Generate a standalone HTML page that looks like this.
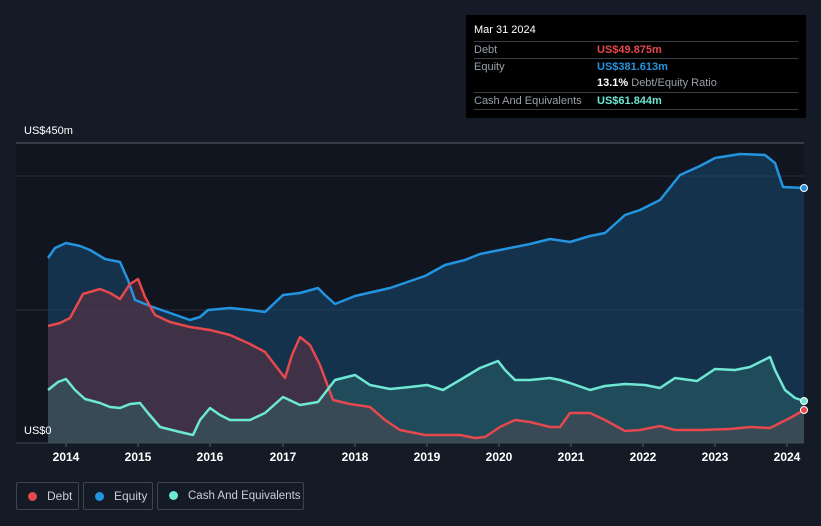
<!DOCTYPE html>
<html><head><meta charset="utf-8"><style>
html,body{margin:0;width:821px;height:526px;overflow:hidden}
body{background:#151b26;font-family:"Liberation Sans",sans-serif;position:relative}
.tt{position:absolute;left:466px;top:15px;width:340px;height:103px;background:#000;color:#fff;font-size:11px}
.row{position:absolute;left:8px;width:324px;border-top:1px solid #3a3f46;height:17px;line-height:17px}
.lab{color:#9aa0a6;position:absolute;left:0}
.val{position:absolute;left:123px;font-weight:bold;white-space:nowrap}
.leg{position:absolute;top:482px;height:28px;border:1px solid #3e4450;border-radius:2px;color:#c9ced6;font-size:12px;line-height:26px;box-sizing:border-box;white-space:nowrap;overflow:hidden}
.dot{display:inline-block;width:9px;height:9px;border-radius:50%;margin:0 10px 0 11px;vertical-align:-1px}
.yr{position:absolute;top:450px;color:#fff;font-size:12px;font-weight:bold;transform:translateX(-50%)}
</style></head><body>
<svg width="821" height="526" style="position:absolute;left:0;top:0">
<rect x="16" y="143" width="788" height="300" fill="#10151f"/>
<line x1="16" y1="143" x2="804" y2="143" stroke="#5a606a"/>
<line x1="16" y1="176" x2="804" y2="176" stroke="#2a303a"/>
<line x1="16" y1="310" x2="804" y2="310" stroke="#2a303a"/>
<line x1="16" y1="443" x2="804" y2="443" stroke="#444a54"/>
<polygon fill="#1a4a73" fill-opacity="0.55" points="48,443 48,258 55,248 66,243 80,246 90,250 105,259 120,262 128,280 135,300 150,306 170,313 190,320 200,317 208,310 230,308 250,310 265,312 283,295 300,293 318,288 325,295 335,304 355,296 390,288 425,276 445,265 465,260 480,254 500,250 530,244 550,239 570,242 590,236 605,233 625,215 640,210 660,200 680,175 700,166 715,158 740,154 765,155 775,163 783,187 804,188 804,443"/>
<polygon fill="#6a3040" fill-opacity="0.5" points="48,443 48,326 60,323 70,318 83,294 100,289 110,293 120,299 130,284 138,279 145,297 155,315 170,322 190,327 210,330 230,335 250,344 265,352 275,365 285,378 292,355 300,337 310,345 320,365 333,400 350,404 370,407 385,420 400,430 425,435 460,435 475,438 485,437 500,427 515,420 530,422 550,427 560,427 570,413 590,413 605,420 625,431 640,430 660,426 675,430 700,430 730,429 750,427 770,428 790,418 804,410 804,443"/>
<polygon fill="#2f6a6a" fill-opacity="0.45" points="48,443 48,390 58,382 66,379 75,390 85,399 100,403 110,407 120,408 130,404 140,403 148,413 160,427 180,432 193,435 200,420 210,408 220,415 230,420 250,420 265,413 283,397 300,405 318,402 335,380 355,375 370,385 390,389 410,387 427,385 443,390 460,380 480,368 498,361 505,370 515,380 530,380 550,378 560,380 570,383 590,390 605,386 625,384 645,385 660,388 675,378 697,381 715,369 735,370 750,367 760,362 770,357 775,370 785,390 795,398 804,401 804,443"/>
<g fill="none" stroke-width="2.5" stroke-linejoin="round">
<polyline stroke="#2394df" points="48,258 55,248 66,243 80,246 90,250 105,259 120,262 128,280 135,300 150,306 170,313 190,320 200,317 208,310 230,308 250,310 265,312 283,295 300,293 318,288 325,295 335,304 355,296 390,288 425,276 445,265 465,260 480,254 500,250 530,244 550,239 570,242 590,236 605,233 625,215 640,210 660,200 680,175 700,166 715,158 740,154 765,155 775,163 783,187 804,188"/>
<polyline stroke="#e5484d" points="48,326 60,323 70,318 83,294 100,289 110,293 120,299 130,284 138,279 145,297 155,315 170,322 190,327 210,330 230,335 250,344 265,352 275,365 285,378 292,355 300,337 310,345 320,365 333,400 350,404 370,407 385,420 400,430 425,435 460,435 475,438 485,437 500,427 515,420 530,422 550,427 560,427 570,413 590,413 605,420 625,431 640,430 660,426 675,430 700,430 730,429 750,427 770,428 790,418 804,410"/>
<polyline stroke="#6ee7d4" points="48,390 58,382 66,379 75,390 85,399 100,403 110,407 120,408 130,404 140,403 148,413 160,427 180,432 193,435 200,420 210,408 220,415 230,420 250,420 265,413 283,397 300,405 318,402 335,380 355,375 370,385 390,389 410,387 427,385 443,390 460,380 480,368 498,361 505,370 515,380 530,380 550,378 560,380 570,383 590,390 605,386 625,384 645,385 660,388 675,378 697,381 715,369 735,370 750,367 760,362 770,357 775,370 785,390 795,398 804,401"/>
</g>
<circle cx="804" cy="188" r="3.5" fill="#2394df" stroke="#fff" stroke-width="1"/>
<circle cx="804" cy="410" r="3.5" fill="#e5484d" stroke="#fff" stroke-width="1"/>
<circle cx="804" cy="401" r="3.5" fill="#6ee7d4" stroke="#fff" stroke-width="1"/>
<g stroke="#555b65"><line x1="66" y1="443" x2="66" y2="447"/><line x1="138" y1="443" x2="138" y2="447"/><line x1="210" y1="443" x2="210" y2="447"/><line x1="283" y1="443" x2="283" y2="447"/><line x1="355" y1="443" x2="355" y2="447"/><line x1="427" y1="443" x2="427" y2="447"/><line x1="499" y1="443" x2="499" y2="447"/><line x1="571" y1="443" x2="571" y2="447"/><line x1="643" y1="443" x2="643" y2="447"/><line x1="715" y1="443" x2="715" y2="447"/><line x1="787" y1="443" x2="787" y2="447"/></g>
</svg>
<div style="position:absolute;left:24px;top:125px;color:#fff;font-size:11px">US$450m</div>
<div style="position:absolute;left:24px;top:425px;color:#fff;font-size:11px">US$0</div>
<div class="yr" style="left:66px">2014</div><div class="yr" style="left:138px">2015</div><div class="yr" style="left:210px">2016</div><div class="yr" style="left:283px">2017</div><div class="yr" style="left:355px">2018</div><div class="yr" style="left:427px">2019</div><div class="yr" style="left:499px">2020</div><div class="yr" style="left:571px">2021</div><div class="yr" style="left:643px">2022</div><div class="yr" style="left:715px">2023</div><div class="yr" style="left:787px">2024</div>
<div class="tt">
<div style="position:absolute;left:8px;top:9px;font-size:11px">Mar 31 2024</div>
<div class="row" style="top:26px"><span class="lab">Debt</span><span class="val" style="color:#e5484d">US$49.875m</span></div>
<div class="row" style="top:43px"><span class="lab">Equity</span><span class="val" style="color:#2394df">US$381.613m</span></div>
<div class="row" style="top:60px;border-top:none"><span class="val" style="color:#fff">13.1% <span style="font-weight:normal;color:#9aa0a6">Debt/Equity Ratio</span></span></div>
<div class="row" style="top:77px"><span class="lab">Cash And Equivalents</span><span class="val" style="color:#6ee7d4">US$61.844m</span></div>
<div class="row" style="top:94px;height:0"></div>
</div>
<div class="leg" style="left:16px;width:63px"><span class="dot" style="background:#e5484d"></span>Debt</div>
<div class="leg" style="left:83px;width:70px"><span class="dot" style="background:#2394df"></span>Equity</div>
<div class="leg" style="left:157px;width:147px;font-size:11.5px"><span class="dot" style="background:#6ee7d4"></span>Cash And Equivalents</div>
</body></html>
